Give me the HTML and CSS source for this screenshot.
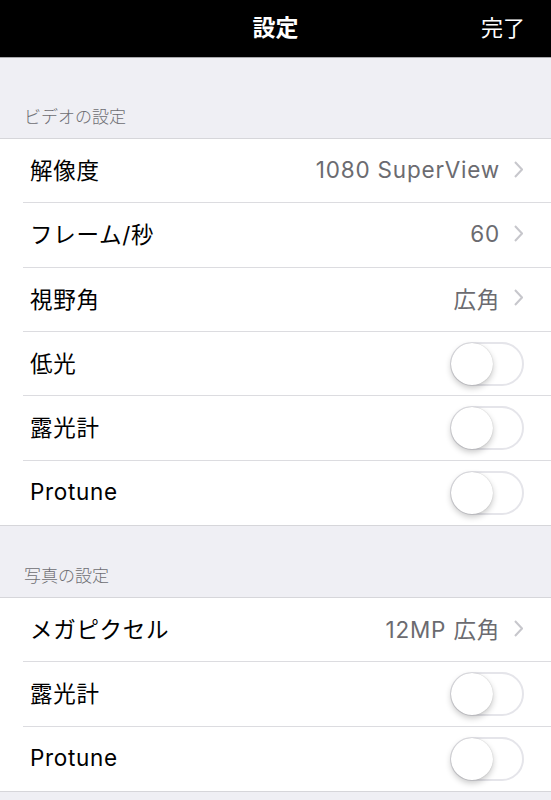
FILE: index.html
```html
<!DOCTYPE html>
<html lang="ja">
<head>
    <meta charset="UTF-8">
    <meta name="viewport" content="width=device-width, initial-scale=1.0">
    <title>設定</title>
    <link rel="stylesheet" href="styles.css">
</head>
<body>
    <div class="navbar">
        <div class="nav-title">設定</div>
        <div class="nav-done">完了</div>
    </div>

    <div class="section-header first">ビデオの設定</div>
    <div class="group">
        <div class="row">
            <span class="label">解像度</span>
            <span class="value">1080 SuperView</span>
            <svg class="chevron" viewBox="0 0 9 17"><polyline points="1,1 8,8.5 1,16"/></svg>
        </div>
        <div class="row">
            <span class="label">フレーム/秒</span>
            <span class="value">60</span>
            <svg class="chevron" viewBox="0 0 9 17"><polyline points="1,1 8,8.5 1,16"/></svg>
        </div>
        <div class="row">
            <span class="label">視野角</span>
            <span class="value">広角</span>
            <svg class="chevron" viewBox="0 0 9 17"><polyline points="1,1 8,8.5 1,16"/></svg>
        </div>
        <div class="row">
            <span class="label">低光</span>
            <span class="toggle"><span class="knob"></span></span>
        </div>
        <div class="row">
            <span class="label">露光計</span>
            <span class="toggle"><span class="knob"></span></span>
        </div>
        <div class="row">
            <span class="label">Protune</span>
            <span class="toggle"><span class="knob"></span></span>
        </div>
    </div>

    <div class="section-header">写真の設定</div>
    <div class="group">
        <div class="row">
            <span class="label">メガピクセル</span>
            <span class="value">12MP 広角</span>
            <svg class="chevron" viewBox="0 0 9 17"><polyline points="1,1 8,8.5 1,16"/></svg>
        </div>
        <div class="row">
            <span class="label">露光計</span>
            <span class="toggle"><span class="knob"></span></span>
        </div>
        <div class="row">
            <span class="label">Protune</span>
            <span class="toggle"><span class="knob"></span></span>
        </div>
    </div>
</body>
</html>
```

FILE: styles.css
```css
body {
    margin: 0;
    padding: 0;
    background-color: #efeff4;
    font-family: "Inter", "Noto Sans CJK JP", sans-serif;
    color: #000;
}
.navbar {
    height: 57px;
    background-color: #000;
    border-bottom: 1px solid #a8a8ac;
    display: flex;
    align-items: center;
    justify-content: center;
    position: relative;
}
.nav-title {
    color: #fff;
    font-family: "Noto Sans CJK JP", sans-serif;
    font-size: 23px;
    font-weight: 700;
    margin-top: -6px;
}
.nav-done {
    position: absolute;
    right: 26px;
    top: 10px;
    color: #fff;
    font-family: "Noto Sans CJK JP", sans-serif;
    font-size: 22px;
    font-weight: 400;
}
.section-header {
    height: 71px;
    box-sizing: border-box;
    padding: 0 24px 10px;
    display: flex;
    align-items: flex-end;
    font-family: "Noto Sans CJK JP", sans-serif;
    font-size: 17px;
    font-weight: 300;
    color: #6d6d72;
}
.section-header.first {
    height: 80px;
}
.group {
    background-color: #fff;
    border-top: 1px solid #d6d6da;
    border-bottom: 1px solid #d6d6da;
}
.row {
    height: 64.33px;
    box-sizing: border-box;
    margin-left: 23px;
    padding: 0 27px 3px 7px;
    display: flex;
    align-items: center;
    border-bottom: 1px solid #dcdce0;
}
.row:last-child {
    border-bottom: none;
}
.label {
    flex: 1;
    font-size: 22.5px;
    letter-spacing: 0.7px;
    color: #000;
}
.value {
    font-size: 22.5px;
    letter-spacing: 0.8px;
    color: #6b6b70;
}
.chevron {
    width: 9px;
    height: 17px;
    margin-left: 14px;
    margin-right: 1px;
    fill: none;
    stroke: #c7c7cc;
    stroke-width: 2;
}
.toggle {
    width: 74px;
    height: 44px;
    box-sizing: border-box;
    border: 2px solid #e5e5ea;
    border-radius: 22px;
    background-color: #fff;
    position: relative;
    margin-top: 3px;
}
.knob {
    position: absolute;
    left: -1px;
    top: -1px;
    width: 42px;
    height: 42px;
    border-radius: 50%;
    background-color: #fff;
    box-shadow: 0 3px 6px rgba(0, 0, 0, 0.22), 0 0 1px rgba(0, 0, 0, 0.25);
}
```
